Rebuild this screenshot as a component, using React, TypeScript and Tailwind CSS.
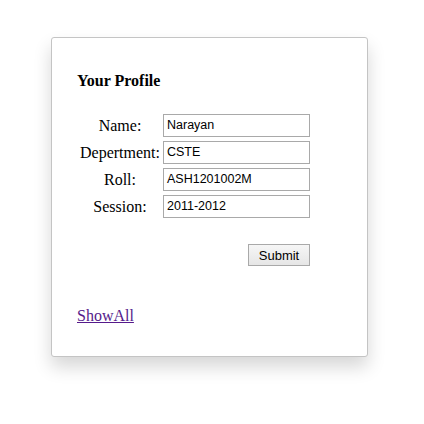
import React from "react";

const fields = [
  { label: "Name:", value: "Narayan" },
  { label: "Depertment:", value: "CSTE" },
  { label: "Roll:", value: "ASH1201002M" },
  { label: "Session:", value: "2011-2012" },
];

export default function App() {
  return (
    <div className="min-h-screen bg-white pt-[37px] pl-[51px] font-['Liberation_Serif',serif] text-black">
      <div className="w-[317px] h-[320px] border border-[#c4c4c4] rounded-[3px] bg-white shadow-[0_10px_18px_rgba(0,0,0,0.16)] pl-[25px] pr-[57px] pt-[34px]">
        <h2 className="text-[16px] leading-[18px] font-bold">Your Profile</h2>

        <div className="mt-[24px] grid grid-cols-[85px_147px] gap-x-[1px] gap-y-[4px]">
          {fields.map((f) => (
            <React.Fragment key={f.label}>
              <div className="h-[23px] flex items-center justify-center text-[16px] leading-none pl-[1px]">
                {f.label}
              </div>
              <div className="h-[23px] border border-[#a9a9a9] flex items-center px-[3px] font-['Liberation_Sans',sans-serif] text-[12.5px] leading-none">
                {f.value}
              </div>
            </React.Fragment>
          ))}
        </div>

        <div className="mt-[26px] flex justify-end">
          <button className="h-[22px] w-[62px] border border-[#a9a9a9] bg-gradient-to-b from-[#f6f6f6] to-[#e6e6e6] font-['Liberation_Sans',sans-serif] text-[13px] leading-none text-black">
            Submit
          </button>
        </div>

        <div className="mt-[38px]">
          <a href="#" className="text-[16px] leading-[18px] text-[#551a8b] underline">
            ShowAll
          </a>
        </div>
      </div>
    </div>
  );
}
